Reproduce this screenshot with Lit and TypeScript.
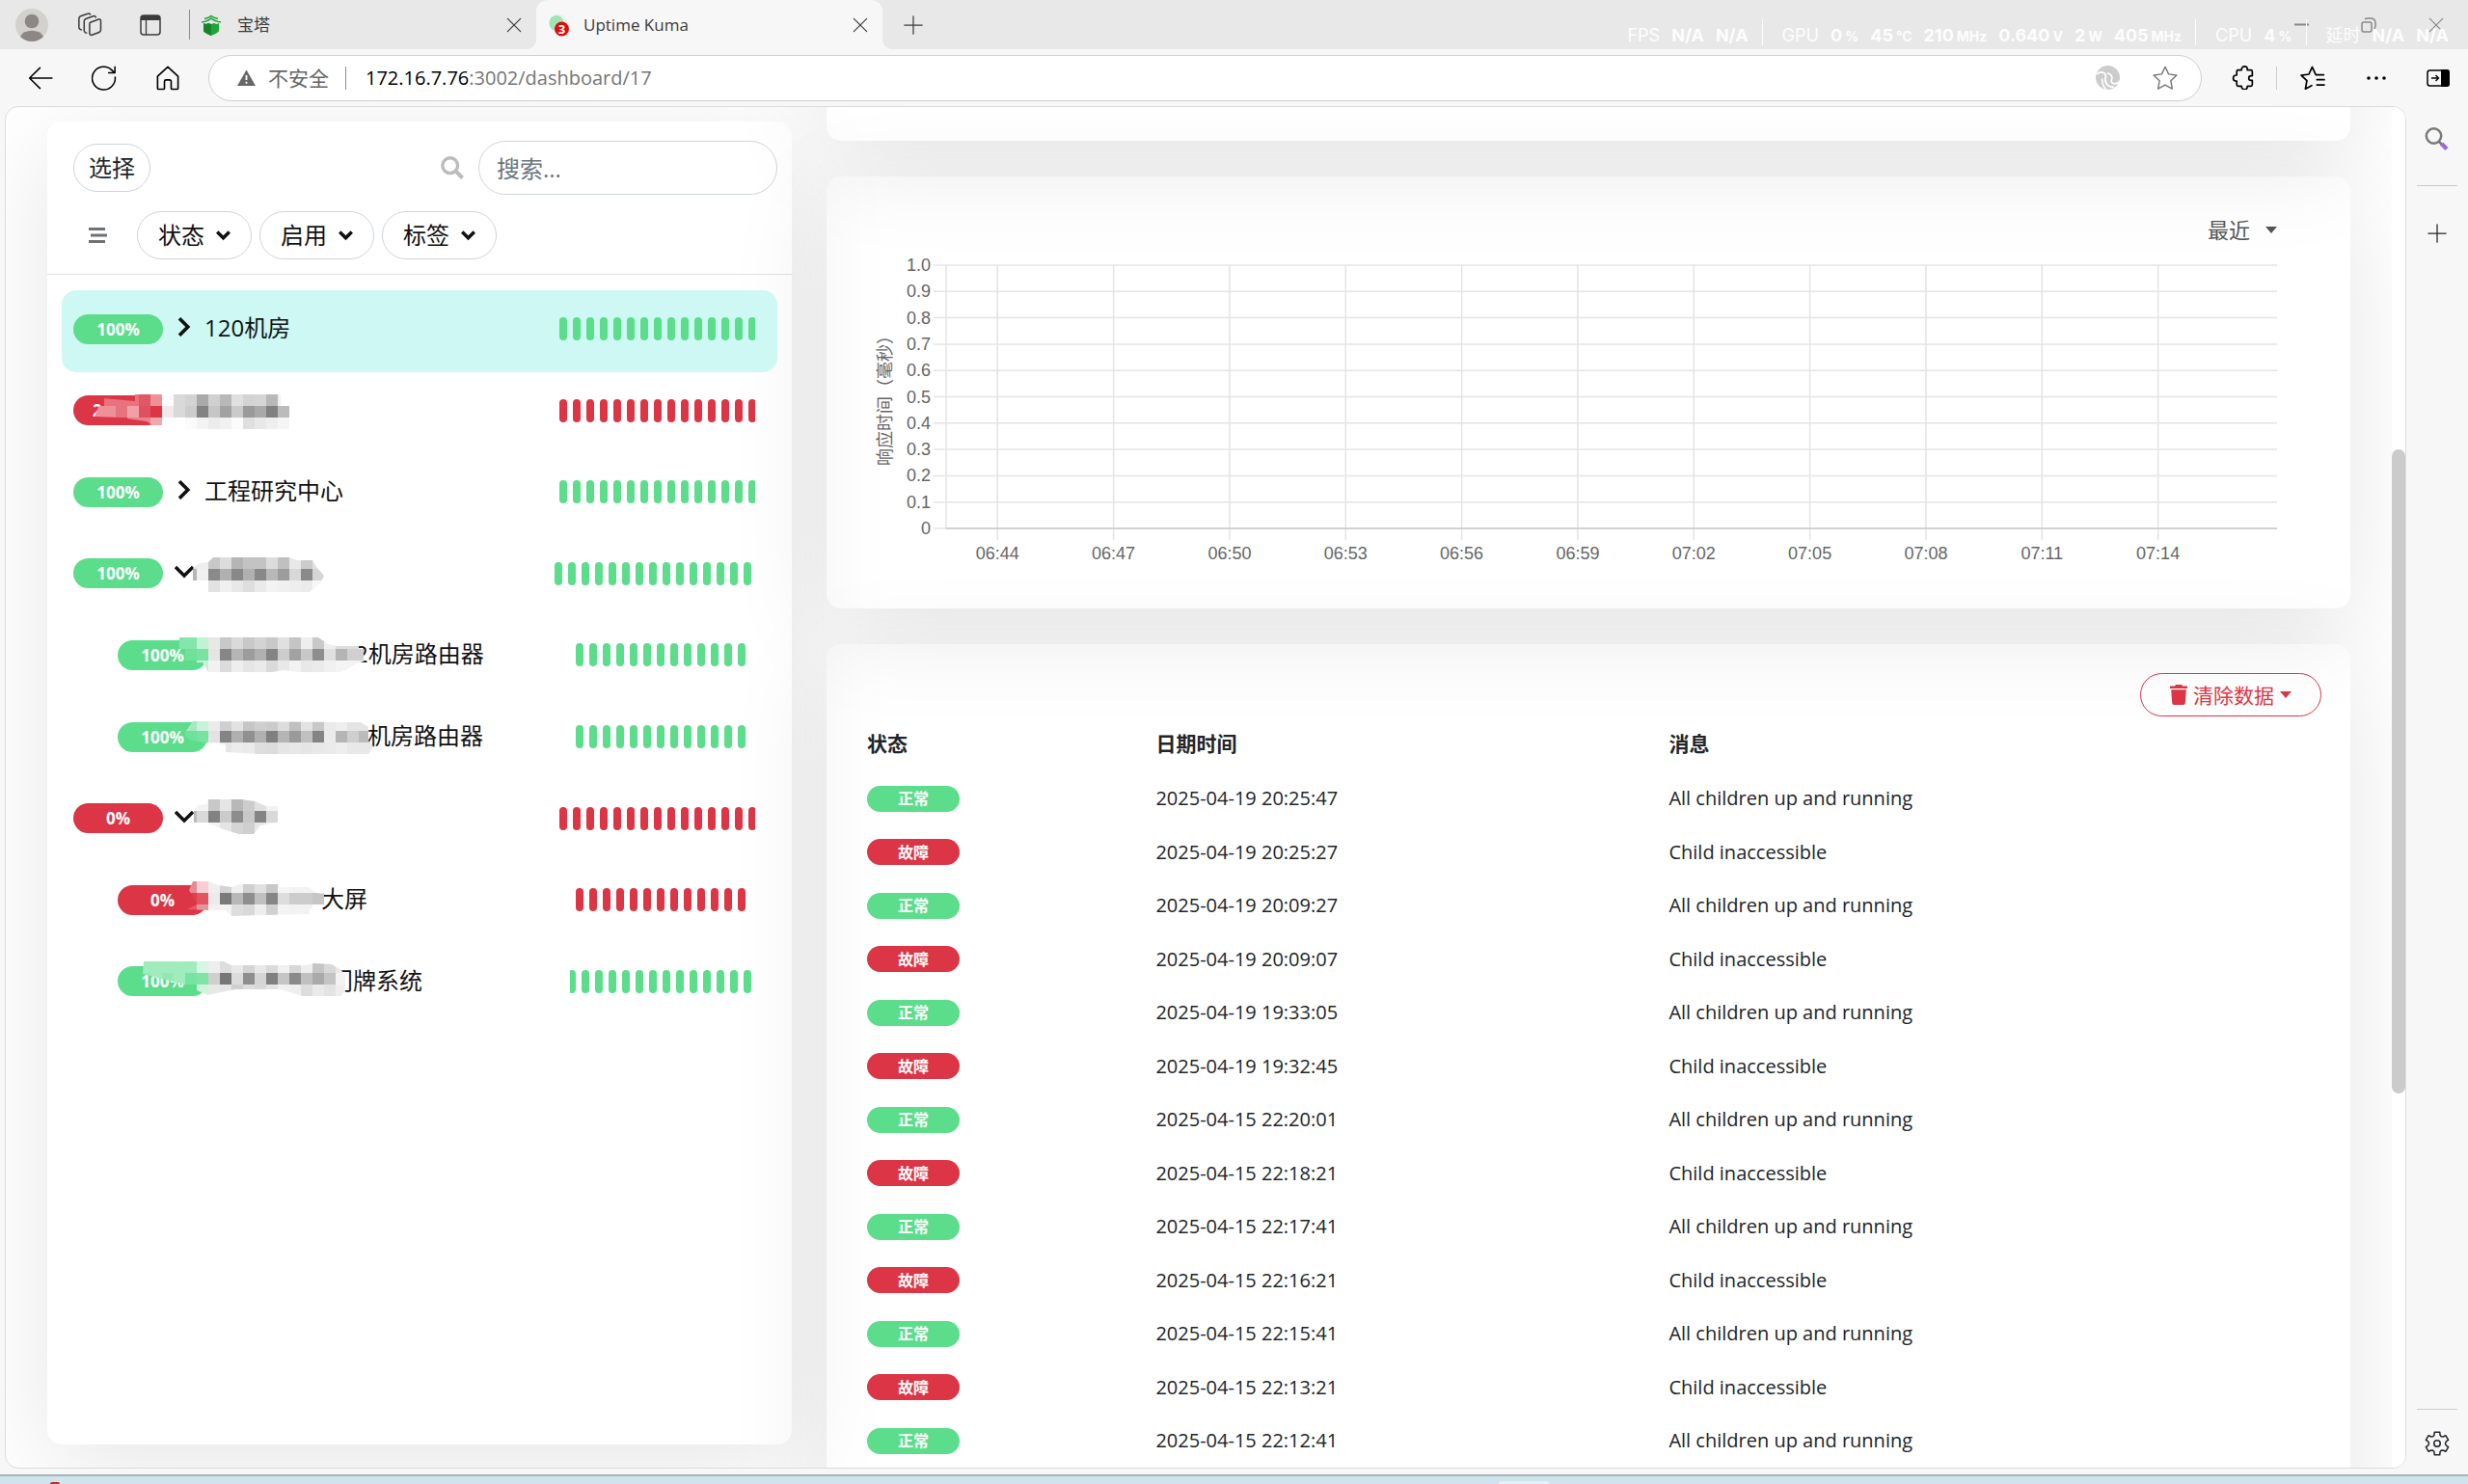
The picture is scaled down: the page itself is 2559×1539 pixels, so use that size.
import { LitElement, html, svg, css, nothing } from "lit";
import { customElement, property, state } from "lit/decorators.js";
import { classMap } from "lit/directives/class-map.js";
import { styleMap } from "lit/directives/style-map.js";

type Level = "up" | "down";

interface Mosaic {
  /** Top edge and left edge of the first cell, inside the row. */
  x: number;
  y: number;
  rows: string[][];
  clip: string;
}

interface Monitor {
  uptime: string;
  level: Level;
  name: string;
  child?: boolean;
  active?: boolean;
  arrow?: "right" | "down";
  hidden?: number;
  bars: number;
  align: "wide" | "shifted" | "nested" | "tail";
  partial?: boolean;
  mosaic?: Mosaic;
}

const CELL = 12;

const hexRow = (s: string) =>
  s.split(" ").map((v) => (v === "-" ? "" : v.length === 2 ? `#${v}${v}${v}` : `#${v}`));

const MONITORS: Monitor[] = [
  { uptime: "100%", level: "up", name: "120机房", active: true, arrow: "right", bars: 15, align: "wide" },
  {
    uptime: "2.", level: "down", name: "", bars: 15, align: "wide", partial: true,
    mosaic: {
      x: 32, y: 23,
      rows: [
        hexRow("- e8737f e8737f e8737f e05865 ef8f96 fd d9 d3 a9 d0 b8 e0 d3 d5 b8 f0"),
        hexRow("ef9098 ef9098 e8737f f2a0a8 e05060 dc3545 f3e8ea d9 cc 83 c6 a2 ca 9a a9 80 bb"),
        hexRow("- - - e8838c e8838c f0a8ae ff ff fb f3 eb f1 fb df e8 ee f5"),
      ],
      clip: "42,27 76,30 76,23 227,23 227,35 236,35 236,59 104,59 104,55 94,55 88,51 60,47 34,46",
    },
  },
  { uptime: "100%", level: "up", name: "工程研究中心", arrow: "right", bars: 15, align: "wide" },
  {
    uptime: "100%", level: "up", name: "", arrow: "down", bars: 15, align: "shifted",
    mosaic: {
      x: 128, y: 23,
      rows: [
        hexRow("e8 ee c8 dc b5 c3 c3 dc c0 e8 cc e0"),
        hexRow("b5 f0 8a b0 88 b0 88 b8 9c d8 8a d5"),
        hexRow("- - e2 f0 e8 de ea f3 f0 ee eb f6"),
      ],
      clip: "136,35 142,29 152,28 157,23 236,23 244,26 260,26 265,34 272,42 268,50 257,59 152,59 152,47 136,47",
    },
  },
  {
    uptime: "100%", level: "up", name: "2机房路由器", child: true, hidden: 145, bars: 13, align: "nested",
    mosaic: {
      x: 116, y: 22,
      rows: [
        hexRow("84e6aa 84e6aa c2f2d6 e8 c8 da c8 d3 c8 e0 c4 ee c8 ee dd dd"),
        hexRow("- 70e09a 78e3a0 e5 86 b5 9c b0 84 cc a2 c8 8e e0 b4 d0 d0"),
        hexRow("- - c8f0d8 f2 dc ee e5 ea da e8 f2 e8 eb f0 f4 f4 f4"),
      ],
      clip: "122,22 266,22 276,29 286,31 313,31 313,47 306,49 296,55 288,58 246,58 230,56 218,58 152,58 146,48 128,48 128,34 122,34",
    },
  },
  {
    uptime: "100%", level: "up", name: "机房路由器", child: true, hidden: 158, bars: 13, align: "nested",
    mosaic: {
      x: 128, y: 22,
      rows: [
        hexRow("a5e9bf c5f2d8 eb cf e2 c5 cf cb dc c0 e2 c8 ea ee e4 e4"),
        hexRow("70e09a 78e3a0 e3 84 b0 90 b0 80 b5 9a c0 84 eb b5 cf bb"),
        hexRow("- c8f0d8 f2 e6 ec ea de dc e5 e8 e5 e8 ea ee e8 e8 e8"),
      ],
      clip: "136,24 310,25 318,30 318,44 323,50 318,58 204,58 170,56 170,48 152,46 134,44 126,38",
    },
  },
  {
    uptime: "0%", level: "down", name: "", arrow: "down", bars: 15, align: "wide",
    mosaic: {
      x: 128, y: 21,
      rows: [
        hexRow("f3 f3 c8 e5 b8 cc e0 f2"),
        hexRow("bb d9 82 cb 8c c8 84 d8"),
        hexRow("- - f2 e5 d5 cf e8 f2"),
      ],
      clip: "137,33 141,27 150,26 152,21 186,21 200,23 212,28 224,28 224,45 206,48 199,57 184,57 170,53 152,46 137,45",
    },
  },
  {
    uptime: "0%", level: "down", name: "大屏", child: true, hidden: 110, bars: 13, align: "nested",
    mosaic: {
      x: 128, y: 21,
      rows: [
        hexRow("e58b93 f5cfd3 ee d3 f0 cf e0 c8 f5 f3 f3 f3"),
        hexRow("dc3f4e e05560 eb 7a b8 8e c0 86 dd cc cc c5"),
        hexRow("e05c68 e5949b f0 f3 dd d8 ee d0 f3 f2 f2"),
      ],
      clip: "136,21 152,21 162,25 176,27 184,24 224,24 226,27 256,27 264,33 274,34 274,45 257,50 257,55 208,56 176,57 170,51 152,51 130,50 140,45 132,30",
    },
  },
  {
    uptime: "100%", level: "up", name: "门牌系统", child: true, hidden: 119, bars: 14, align: "tail",
    mosaic: {
      x: 80, y: 20,
      rows: [
        hexRow("a0ecbd a0ecbd a0ecbd a0ecbd a0ecbd d5f6e2 ee dd e8 d5 e8 da f0 d8 ee c5 d8 e8"),
        hexRow("94e8b4 a0ecbd 94e8b4 a0ecbd 78e3a0 80e4a6 cf 76 dc 8e d5 80 c5 8a c0 aa c4 f3"),
        hexRow("- - - - - d0f3dd e8 e5 cf dd d8 e3 f0 ee dd ea e3 ee"),
      ],
      clip: "85,20 168,20 176,24 252,24 262,22 280,23 290,29 294,35 294,50 290,56 250,56 226,49 180,49 160,53 152,55 140,50 140,44 128,44 84,33",
    },
  },
];

const EVENTS: [Level, string][] = [
  ["up", "2025-04-19 20:25:47"],
  ["down", "2025-04-19 20:25:27"],
  ["up", "2025-04-19 20:09:27"],
  ["down", "2025-04-19 20:09:07"],
  ["up", "2025-04-19 19:33:05"],
  ["down", "2025-04-19 19:32:45"],
  ["up", "2025-04-15 22:20:01"],
  ["down", "2025-04-15 22:18:21"],
  ["up", "2025-04-15 22:17:41"],
  ["down", "2025-04-15 22:16:21"],
  ["up", "2025-04-15 22:15:41"],
  ["down", "2025-04-15 22:13:21"],
  ["up", "2025-04-15 22:12:41"],
];

const TIMES = ["06:44", "06:47", "06:50", "06:53", "06:56", "06:59", "07:02", "07:05", "07:08", "07:11", "07:14"];
const LEVELS = ["1.0", "0.9", "0.8", "0.7", "0.6", "0.5", "0.4", "0.3", "0.2", "0.1", "0"];

/* ---------- icons ---------- */

const gearPath = (() => {
  const pts: string[] = [];
  const at = (deg: number, r: number) => {
    const a = (deg * Math.PI) / 180;
    return `${(12 + r * Math.cos(a)).toFixed(2)} ${(12 + r * Math.sin(a)).toFixed(2)}`;
  };
  for (let k = 0; k < 6; k++) {
    const c = -90 + k * 60;
    pts.push(at(c - 19, 8.6), at(c - 13, 11.2), at(c + 13, 11.2), at(c + 19, 8.6), at(c + 30, 7.8));
  }
  return `M${pts.join("L")}Z`;
})();

const line = (size: number, body: unknown, w = 1.3) => html`<svg
  width=${size} height=${size} viewBox="0 0 24 24" fill="none" stroke="currentColor"
  stroke-width=${w} stroke-linecap="round" stroke-linejoin="round" aria-hidden="true">${body}</svg>`;

const STAR = "M12 1.2l3.3 7 7.7 1-5.6 5.3 1.4 7.7L12 18.6l-6.8 3.6 1.4-7.7L1 9.2l7.7-1z";

const icons = {
  avatar: html`<svg width="34" height="34" viewBox="0 0 34 34" aria-hidden="true">
    <circle cx="17" cy="17" r="17" fill="#d3d1cd" />
    <circle cx="17" cy="13" r="7.3" fill="#8c8785" />
    <path d="M5 29a13 10 0 0 1 24 0 17 17 0 0 1-24 0z" fill="#8c8785" /></svg>`,
  workspaces: line(26, svg`
    <path d="M12.6 9.4l8-2.9a1.5 1.5 0 0 1 2 1.4v8.7a2.5 2.5 0 0 1-1.6 2.3l-6.8 2.6a1.7 1.7 0 0 1-2.3-1.6V10.8a1.7 1.7 0 0 1 .7-1.4z"/>
    <path d="M9 19.5l-1.2-.4a1.8 1.8 0 0 1-1.1-1.7V8.3a2.5 2.5 0 0 1 1.6-2.3l7.2-2.6a2 2 0 0 1 2.4 1.1"/>
    <path d="M4 16.5l-1.3-.6a1.8 1.8 0 0 1-1-1.6V5.8a2.5 2.5 0 0 1 1.6-2.3L10 1.2a2 2 0 0 1 2.5.6"/>`, 1.4),
  panel: html`<svg width="22" height="22" viewBox="0 0 22 22" fill="none" aria-hidden="true">
    <rect x="1" y="1" width="20" height="20" rx="3" stroke="#3b3b3b" stroke-width="1.5" />
    <path d="M1 6V4a3 3 0 0 1 3-3h14a3 3 0 0 1 3 3v2z" fill="#3b3b3b" />
    <path d="M6.5 6v15" stroke="#3b3b3b" stroke-width="1.3" /></svg>`,
  pagoda: html`<svg width="24" height="22" viewBox="0 0 24 22" aria-hidden="true">
    <path d="M2 9l2.5 1 2.5-1 3 1 3-1 2.5 1L18 9v8q0 1.500-8 5-8-3.500-8-5z" fill="#20a53a" />
    <path d="M2 9l2.5 1 2.5-1 3 1v12q-8-3.500-8-5z" fill="#15852b" />
    <path d="M0 8q7-1 10-4 3 3 10 4M3 4.500Q8 3.500 10 1.500q2 2 7 3" fill="none" stroke="#20a53a" stroke-width="1.5" /></svg>`,
  kuma: html`<svg width="24" height="26" viewBox="0 0 24 26" aria-hidden="true">
    <ellipse cx="11" cy="11" rx="10" ry="9.5" fill="#e9f3ec" /><ellipse cx="9" cy="11" rx="7.5" ry="8" fill="#9ee4b4" />
    <circle cx="14.5" cy="17" r="7.5" fill="#e00b0b" />
    <text x="14.5" y="22" text-anchor="middle" font-size="13" font-weight="700" fill="#fff">3</text></svg>`,
  close: line(16, svg`<path d="M2 2l20 20M22 2L2 22"/>`, 1.8),
  plus: line(20, svg`<path d="M12 1v22M1 12h22"/>`, 1.5),
  back: line(26, svg`<path d="M23 12H1.5M11.5 2.2L1.5 12l10 9.8"/>`, 1.4),
  refresh: line(26, svg`<path d="M22.5 11A11 11 0 1 1 19.5 4.5L22 7M22.3 1.2V7h-6"/>`, 1.4),
  home: line(26, svg`<path d="M2.2 10.2L12 1.2l9.8 9v11.4a1 1 0 0 1-1 1h-4.6a1 1 0 0 1-1-1v-6.4a1.500 1.500 0 0 0-1.500-1.500h-3.400a1.500 1.500 0 0 0-1.500 1.500v6.400a1 1 0 0 1-1 1H3.200a1 1 0 0 1-1-1z"/>`, 1.5),
  warning: html`<svg width="19" height="17" viewBox="0 0 19 17" aria-hidden="true">
    <path d="M9.5 0.500L19 17H0z" fill="#666" /><path d="M9.5 6v5M9.5 12.800v2" stroke="#fff" stroke-width="1.8" /></svg>`,
  swirl: html`<svg width="25" height="25" viewBox="0 0 24 24" fill="none" aria-hidden="true">
    <circle cx="12" cy="12" r="12" fill="#ccc" />
    <path d="M1 8.500C6 4.500 11.500 7.500 9.500 12.500 9 18 12.500 21.500 18 21.500" stroke="#fff" stroke-width="1.700" />
    <path d="M6.500 13C6 18.500 8.500 22 11 24.500" stroke="#fff" stroke-width="1.500" />
    <path d="M11.500 7.500Q17 9 16 13.500 14.500 17 18 18 22 18.500 24.500 15" stroke="#fff" stroke-width="1.600" /></svg>`,
  star: line(26, svg`<path d=${STAR}/>`, 1.3),
  puzzle: line(25, svg`<path d="M8.5 4.5h1.3V3.8a2.9 2.9 0 0 1 5.8 0v.7H19a1.5 1.5 0 0 1 1.5 1.5v4.2h-1.2a2.3 2.3 0 0 0 0 4.6h1.2V19a1.5 1.5 0 0 1-1.5 1.5h-3.4v.4a2.9 2.9 0 0 1-5.8 0v-.4H6.5A1.5 1.5 0 0 1 5 19v-3.6h-.6a2.9 2.9 0 0 1 0-5.8H5V6a1.5 1.5 0 0 1 1.5-1.5z"/>`, 1.6),
  favorites: line(26, svg`<path d="M22.5 8.8H15L11.5 1.4 8.3 8.3 1 9.3l5.4 5.2-1.4 7.8 6-3.2M16 13.5h7M16 18.5h7"/>`, 1.6),
  dots: html`<svg width="20" height="6" viewBox="0 0 20 6" aria-hidden="true"><circle cx="2" cy="3" r="1.8"/><circle cx="10" cy="3" r="1.8"/><circle cx="18" cy="3" r="1.8"/></svg>`,
  sidebar: html`<svg width="24" height="18" viewBox="0 0 24 18" fill="none" aria-hidden="true">
    <rect x="1" y="1" width="22" height="16" rx="2.5" stroke="#000" stroke-width="1.5" />
    <path d="M15 0h6a3 3 0 0 1 3 3v12a3 3 0 0 1-3 3h-6z" fill="#000" />
    <path d="M5 9h7.5M9.5 6l3 3-3 3" stroke="#000" stroke-width="1.4" /></svg>`,
  minimize: html`<svg width="15" height="15" viewBox="0 0 15 15" aria-hidden="true"><path d="M0 7.5h15" stroke="#888" stroke-width="2" /></svg>`,
  restore: html`<svg width="16" height="16" viewBox="0 0 16 16" fill="none" stroke="#888" stroke-width="1.5" aria-hidden="true">
    <rect x="1" y="5" width="10" height="10" rx="2" /><path d="M4 2q1-1 3-1h3q5 0 5 5v3q0 2-1.5 3" /></svg>`,
  lens: html`<svg width="26" height="26" viewBox="0 0 26 26" fill="none" aria-hidden="true">
    <circle cx="9.5" cy="10" r="7.7" stroke="#7a7a7a" stroke-width="2.5" />
    <path d="M15 16l2.5 2.5" stroke="#777" stroke-width="2.5" />
    <path d="M17.5 18l5.5 5.5" stroke="#9b6bd3" stroke-width="4.5" /></svg>`,
  gear: line(26, svg`<path d=${gearPath}/><circle cx="12" cy="12" r="3"/>`, 1.4),
  find: html`<svg width="24" height="24" viewBox="0 0 24 24" fill="none" stroke="#bcbcbc" aria-hidden="true">
    <circle cx="9.7" cy="9.7" r="7.9" stroke-width="3.4" /><path d="M15 15l7.5 7.5" stroke-width="4" /></svg>`,
  sort: html`<svg width="19" height="18" viewBox="0 0 19 18" stroke="#6f7275" stroke-width="3" aria-hidden="true">
    <path d="M0 2.5h17M2 9h17M0 15.5h17" /></svg>`,
  down: html`<svg width="15" height="11" viewBox="0 0 15 11" fill="none" stroke="currentColor" stroke-width="3.6" aria-hidden="true">
    <path d="M1.2 1.5l6.3 6.3 6.3-6.3" /></svg>`,
  downWide: html`<svg width="20" height="14" viewBox="0 0 20 14" fill="none" stroke="currentColor" stroke-width="3.4" aria-hidden="true">
    <path d="M1 2l9 9 9-9" /></svg>`,
  right: html`<svg width="20" height="20" viewBox="0 0 20 20" fill="none" stroke="currentColor" stroke-width="3.6" aria-hidden="true">
    <path d="M5 1.2l8.800 8.800L5 18.800" /></svg>`,
  caret: html`<svg width="12" height="7" viewBox="0 0 12 7" fill="currentColor" aria-hidden="true"><path d="M0 0h12L6 7z" /></svg>`,
  trash: html`<svg width="18" height="21" viewBox="0 0 18 21" fill="currentColor" aria-hidden="true">
    <path d="M0 1.5h5L6 0h6l1 1.5h5v2.5H0zM1.2 5.2h15.6L15.8 19.2a2 2 0 0 1-2 1.8H4.2a2 2 0 0 1-2-1.8z" /></svg>`,
};

const base = css`
  *, *::before, *::after { box-sizing: border-box; }
  button, input { font: inherit; color: inherit; margin: 0; }
  button { background: none; border: 0; padding: 0; cursor: pointer; display: inline-flex; align-items: center; justify-content: center; }
  svg { display: block; flex: none; }
`;

/* ---------- status badge ---------- */

@customElement("status-badge")
class StatusBadge extends LitElement {
  @property() level: Level = "up";
  @property() size: "uptime" | "event" = "uptime";
  @property({ type: Boolean }) partial = false;

  static styles = [base, css`
    :host { display: block; flex: none; }
    .badge { display: flex; align-items: center; justify-content: center; color: #fff; font-weight: 700; border-radius: 16px; }
    .uptime { width: 93px; height: 31px; font-size: 17px; line-height: 20px; padding-top: 1px; }
    .event { width: 96px; height: 27px; font-size: 16px; line-height: 20px; }
    .up { background: #5cdd8b; }
    .down { background: #dc3545; }
    .partial { justify-content: flex-start; padding-left: 20px; }
  `];

  render() {
    return html`<span class=${classMap({ badge: true, [this.size]: true, [this.level]: true, partial: this.partial })}><slot></slot></span>`;
  }
}

/* ---------- monitor list ---------- */

@customElement("monitor-list")
class MonitorList extends LitElement {
  static styles = [base, css`
    :host { display: flex; flex-direction: column; height: 100%; border-radius: 15px; box-shadow: 0 22px 105px rgba(0, 0, 0, 0.1); }
    .head { padding: 20px 15px 15px 27px; border-bottom: 1px solid #dee2e6; display: flex; flex-direction: column; gap: 17px; }
    .line { display: flex; align-items: center; }
    .pill { height: 50px; border: 1px solid #ced4da; border-radius: 25px; font-size: 24px; line-height: 30px; color: #111; gap: 12px; padding: 0 21px; }
    .select { padding: 0 15px; color: #212529; }
    .search { margin-left: auto; display: flex; align-items: center; gap: 15px; }
    .field { width: 310px; height: 56px; border: 1px solid #ced4da; border-radius: 28px; padding: 0 18px; font-size: 24px; background: #fff; outline: 0; }
    .field::placeholder { color: #6c757d; opacity: 1; }
    .filters { gap: 8px; padding-left: 16px; }
    .sort { margin-right: 23px; }
    .items { list-style: none; margin: 0; padding: 16px 15px 0; display: grid; grid-auto-rows: 1fr; height: 777px; }
    .entry { display: contents; }
    .item { position: relative; display: flex; align-items: center; padding: 0 0 4px 12px; border-radius: 15px; color: #111; text-decoration: none; }
    .active { background: #cdf8f4; }
    .child { padding-left: 58px; }
    .arrow { width: 20px; margin-left: 12px; display: flex; justify-content: center; padding-bottom: 4px; }
    .name { font-size: 24px; line-height: 32px; margin-left: 11px; padding-bottom: 2px; white-space: nowrap; }
    .child .name { margin-left: 8px; }
    .beats { margin-left: auto; display: flex; gap: 6px; overflow: hidden; }
    .beat { width: 8px; height: 24px; border-radius: 4px; flex: none; }
    .up { background: #5cdd8b; }
    .down { background: #dc3545; }
    .wide { width: 203px; margin-right: 23px; }
    .shifted { margin-right: 27px; }
    .nested { margin-right: 33px; }
    .tail { width: 188px; margin-right: 27px; justify-content: flex-end; }
    .mosaic { position: absolute; left: 0; top: 0; width: 100%; height: 100%; overflow: visible; pointer-events: none; }
  `];

  private mosaic(m: Mosaic, i: number) {
    return html`<svg class="mosaic" shape-rendering="crispEdges" aria-hidden="true">
      <clipPath id="m${i}"><polygon points=${m.clip} /></clipPath>
      <g clip-path="url(#m${i})">
        ${m.rows.map((r, y) => r.map((c, x) => c
          ? svg`<rect x=${m.x + x * CELL} y=${m.y + y * CELL} width=${CELL} height=${CELL} fill=${c} />`
          : nothing))}
      </g></svg>`;
  }

  render() {
    return html`
      <div class="head">
        <div class="line">
          <button class="pill select">选择</button>
          <label class="search">${icons.find}
            <input class="field" type="text" placeholder="搜索..." aria-label="搜索" />
          </label>
        </div>
        <div class="line filters">
          <button class="sort" aria-label="排序">${icons.sort}</button>
          ${["状态", "启用", "标签"].map((t) => html`<button class="pill">${t}${icons.down}</button>`)}
        </div>
      </div>
      <ul class="items">
        ${MONITORS.map((m, i) => html`<li class="entry">
          <a href="#" class=${classMap({ item: true, active: !!m.active, child: !!m.child })}>
            <status-badge .level=${m.level} .partial=${!!m.partial}>${m.uptime}</status-badge>
            ${m.arrow ? html`<span class="arrow">${m.arrow === "right" ? icons.right : icons.downWide}</span>` : nothing}
            <span class="name" style=${styleMap({ paddingLeft: `${m.hidden ?? 0}px` })}>${m.name}</span>
            <span class="beats ${m.align}">
              ${Array.from({ length: m.bars }, () => html`<i class="beat ${m.level}"></i>`)}
            </span>
            ${m.mosaic ? this.mosaic(m.mosaic, i) : nothing}
          </a></li>`)}
      </ul>`;
  }
}

/* ---------- response time chart ---------- */

@customElement("ping-chart")
class PingChart extends LitElement {
  static styles = [base, css`
    :host { display: block; padding: 36px 76px 83px 43px; }
    .top { display: flex; justify-content: flex-end; }
    .period { color: #555; font-size: 22px; line-height: 38px; height: 38px; gap: 16px; }
    .body { display: flex; margin-top: 18px; }
    .title { writing-mode: vertical-rl; text-orientation: sideways; transform: rotate(180deg); width: 36px; margin-right: 45px; text-align: center; color: #666; font: 18px/36px "Liberation Sans", "Noto Sans CJK SC", sans-serif; }
    .plot { flex: 1; min-width: 0; height: 273px; overflow: visible; }
    .grid { stroke: #e4e4e4; stroke-width: 1.5; }
    .zero { stroke: #c9c9c9; stroke-width: 1.5; }
    .label { font: 18px "Liberation Sans", sans-serif; fill: #666; }
  `];

  render() {
    const left = 3.86;
    const step = 8.72;
    const gap = 27.3;
    return html`
      <div class="top"><button class="period">最近 ${icons.caret}</button></div>
      <div class="body">
        <span class="title">响应时间（毫秒）</span>
        <svg class="plot" role="img" aria-label="响应时间（毫秒）">
          ${LEVELS.map((t, i) => svg`
            <line class="grid" x1="-13" x2="100%" y1=${i * gap} y2=${i * gap} />
            <text class="label" x="-16" y=${i * gap + 6} text-anchor="end">${t}</text>`)}
          <line class="grid" x1="0" x2="0" y1="0" y2="273" />
          ${TIMES.map((t, i) => svg`
            <line class="grid" x1="${left + i * step}%" x2="${left + i * step}%" y1="0" y2="285" />
            <text class="label" x="${left + i * step}%" y="305" text-anchor="middle">${t}</text>`)}
          <line class="zero" x1="0" x2="100%" y1="273" y2="273" />
        </svg>
      </div>`;
  }
}

/* ---------- event table ---------- */

@customElement("event-table")
class EventTable extends LitElement {
  static styles = [base, css`
    :host { display: block; padding: 30px 30px 120px; }
    .top { display: flex; justify-content: flex-end; }
    .clear { height: 45px; border: 1px solid #dc3545; border-radius: 23px; color: #dc3545; font-size: 21px; line-height: 30px; padding: 0 30px; gap: 6px; }
    .table { width: 100%; table-layout: fixed; border-collapse: collapse; color: #212529; }
    .status { width: 19.7%; }
    .time { width: 35%; }
    .th { height: 57px; font-size: 21px; line-height: 30px; text-align: left; padding: 0 12px 2px; font-weight: 700; }
    .row { height: 55px; }
    .row:nth-child(odd) { height: 56px; }
    .td { font-size: 20px; line-height: 26px; padding: 0 12px; vertical-align: middle; }
  `];

  render() {
    return html`
      <div class="top"><button class="clear">${icons.trash}<span>清除数据</span>${icons.caret}</button></div>
      <table class="table">
        <thead><tr>
          <th class="th status">状态</th><th class="th time">日期时间</th><th class="th">消息</th>
        </tr></thead>
        <tbody>
          ${EVENTS.map(([level, time]) => html`<tr class="row">
            <td class="td"><status-badge size="event" .level=${level}>${level === "up" ? "正常" : "故障"}</status-badge></td>
            <td class="td">${time}</td>
            <td class="td">${level === "up" ? "All children up and running" : "Child inaccessible"}</td>
          </tr>`)}
        </tbody>
      </table>`;
  }
}

/* ---------- hardware overlay ---------- */

@customElement("hardware-overlay")
class HardwareOverlay extends LitElement {
  static styles = [base, css`
    :host { display: flex; height: 27px; font: 18px/27px Inter, "Noto Sans CJK SC", sans-serif; color: #fdfdfd; white-space: nowrap; }
    .group { display: flex; gap: 12px; padding: 3px 14px 0 20px; border-right: 1px solid #fdfdfd; }
    .group:last-child { border: 0; padding-right: 0; }
    .value { font-weight: 700; }
    .unit { font-weight: 700; font-size: 14px; margin-left: 3px; }
  `];

  private groups: [string, [string, string?][]][] = [
    ["FPS", [["N/A"], ["N/A"]]],
    ["GPU", [["0", "%"], ["45", "°C"], ["210", "MHz"], ["0.640", "V"], ["2", "W"], ["405", "MHz"]]],
    ["CPU", [["4", "%"]]],
    ["延时", [["N/A"], ["N/A"]]],
  ];

  render() {
    return this.groups.map(([name, values]) => html`<div class="group"><span>${name}</span>
      ${values.map(([v, u]) => html`<span><span class="value">${v}</span>${u ? html`<span class="unit">${u}</span>` : nothing}</span>`)}
    </div>`);
  }
}

/* ---------- browser window ---------- */

@customElement("app-root")
class AppRoot extends LitElement {
  @state() private tab = 1;

  static styles = [base, css`
    :host { display: flex; flex-direction: column; height: 100vh; overflow: hidden; background: #f7f7f7; color: #212529; font-family: "Open Sans", "Noto Sans CJK SC", sans-serif; }
    .tabs { position: relative; flex: none; display: flex; align-items: center; height: 51px; background: #e8e8e8; color: #3b3b3b; font-size: 17px; }
    .tools { display: flex; align-items: center; width: 197px; padding-left: 16px; height: 31px; border-right: 1px solid #8d8d8d; }
    .workspaces { margin-left: 30px; }
    .panel { margin-left: 39px; }
    .tab { display: flex; align-items: center; width: 359px; height: 51px; padding: 0 15px 0 12px; gap: 16px; }
    .tab .go { flex: 1; justify-content: flex-start; gap: 13px; line-height: 28px; }
    .selected { position: relative; background: #f7f7f7; border-radius: 12px 12px 0 0; }
    .selected::before, .selected::after { content: ""; position: absolute; bottom: 0; width: 10px; height: 10px; }
    .selected::before { left: -10px; background: radial-gradient(circle at 0 0, transparent 10px, #f7f7f7 10px); }
    .selected::after { right: -10px; background: radial-gradient(circle at 100% 0, transparent 10px, #f7f7f7 10px); }
    .new { margin-left: 22px; }
    .window { margin-left: auto; display: flex; align-items: center; gap: 54px; padding-right: 25px; color: #888; }
    .overlay { position: absolute; right: 20px; top: 20px; }
    .toolbar { flex: none; display: flex; align-items: center; height: 59px; padding: 0 19px 0 29px; color: #000; }
    .nav { display: flex; gap: 40px; }
    .address { flex: 1; display: flex; align-items: center; height: 48px; margin-left: 29px; padding: 0 24px 0 29px; background: #fff; border: 1px solid #cfcfcf; border-radius: 24px; font-size: 21px; line-height: 30px; }
    .unsafe { color: #666; margin-left: 13px; padding-right: 17px; }
    .rule { width: 1px; height: 24px; background: #8f8f8f; }
    .url { margin-left: 20px; color: #767676; font-size: 20px; }
    .host { color: #000; }
    .page-actions { margin-left: auto; display: flex; gap: 34px; color: #777; }
    .extras { display: flex; align-items: center; margin-left: 31px; }
    .extras .rule { background: #ccc; margin: 0 24px 0 21px; }
    .dots { margin: 0 42px 0 43px; }
    .main { flex: 1; min-height: 0; display: flex; }
    .view { flex: 1; min-width: 0; margin-left: 5px; display: flex; background: #fff; border: 1px solid #dcdcdc; border-radius: 14px; overflow: hidden; }
    .scroller { flex: 1; min-width: 0; display: flex; overflow: hidden; padding: 0 25px; }
    .side { width: 33.333%; padding: 15px 18px 24px; }
    .content { width: 66.667%; padding: 0 18px; display: flex; flex-direction: column; gap: 37px; }
    .card { flex: none; border-radius: 15px; box-shadow: 0 22px 105px rgba(0, 0, 0, 0.1); }
    .above { height: 400px; margin-top: -365px; }
    .track { width: 14px; display: flex; flex-direction: column; background: #fff; padding: 355px 0 388px; }
    .thumb { flex: 1; border-radius: 7px; background: #cbcbcb; }
    .rail { flex: none; width: 64px; display: flex; flex-direction: column; align-items: center; padding: 21px 0 13px; }
    .rail .sep { width: 42px; height: 1px; background: #ccc; }
    .rail .sep.first { margin: 35px 0 39px; }
    .rail .sep.last { margin: auto 0 22px; }
    .gap { flex: none; height: 6px; }
    .taskbar { flex: none; height: 10px; border-top: 2px solid #a5b4ba; background: #cfe4ec; overflow: hidden; display: flex; align-items: flex-end; }
    .alert { width: 10px; height: 2px; border-radius: 5px 5px 0 0; background: #c62828; margin-left: 52px; }
    .running { width: 52px; height: 3px; border-radius: 4px 4px 0 0; background: #e6f1f5; margin-left: 1492px; }
  `];

  private renderTab(i: number, icon: unknown, title: string) {
    return html`<div class=${classMap({ tab: true, selected: this.tab === i })}>
      <button class="go" @click=${() => (this.tab = i)}>${icon}<span>${title}</span></button>
      <button aria-label="关闭">${icons.close}</button>
    </div>`;
  }

  render() {
    return html`
      <header class="tabs">
        <div class="tools">
          <button aria-label="个人资料">${icons.avatar}</button>
          <button class="workspaces" aria-label="工作区">${icons.workspaces}</button>
          <button class="panel" aria-label="标签页">${icons.panel}</button>
        </div>
        ${this.renderTab(0, icons.pagoda, "宝塔")}
        ${this.renderTab(1, icons.kuma, "Uptime Kuma")}
        <button class="new" aria-label="新建标签页">${icons.plus}</button>
        <div class="window">
          <button aria-label="最小化">${icons.minimize}</button>
          <button aria-label="还原">${icons.restore}</button>
          <button aria-label="关闭窗口">${icons.close}</button>
        </div>
        <hardware-overlay class="overlay"></hardware-overlay>
      </header>
      <nav class="toolbar">
        <div class="nav">
          <button aria-label="后退">${icons.back}</button>
          <button aria-label="刷新">${icons.refresh}</button>
          <button aria-label="主页">${icons.home}</button>
        </div>
        <div class="address">
          ${icons.warning}<span class="unsafe">不安全</span><i class="rule"></i>
          <span class="url"><span class="host">172.16.7.76</span>:3002/dashboard/17</span>
          <div class="page-actions">
            <button aria-label="助手">${icons.swirl}</button>
            <button aria-label="收藏此页">${icons.star}</button>
          </div>
        </div>
        <div class="extras">
          <button aria-label="扩展">${icons.puzzle}</button><i class="rule"></i>
          <button aria-label="收藏夹">${icons.favorites}</button>
          <button class="dots" aria-label="更多">${icons.dots}</button>
          <button aria-label="侧栏">${icons.sidebar}</button>
        </div>
      </nav>
      <div class="main">
        <div class="view">
          <div class="scroller">
            <aside class="side"><monitor-list></monitor-list></aside>
            <main class="content">
              <div class="card above"></div>
              <ping-chart class="card"></ping-chart>
              <event-table class="card"></event-table>
            </main>
          </div>
          <div class="track"><div class="thumb"></div></div>
        </div>
        <div class="rail">
          <button aria-label="搜索">${icons.lens}</button>
          <i class="sep first"></i>
          <button aria-label="添加">${icons.plus}</button>
          <i class="sep last"></i>
          <button aria-label="设置">${icons.gear}</button>
        </div>
      </div>
      <div class="gap"></div>
      <div class="taskbar"><i class="alert"></i><i class="running"></i></div>`;
  }
}
